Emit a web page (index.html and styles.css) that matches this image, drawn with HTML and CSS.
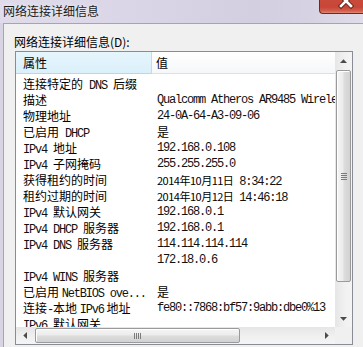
FILE: index.html
```html
<!DOCTYPE html>
<html lang="zh-CN">
<head>
<meta charset="utf-8">
<title>网络连接详细信息</title>
<link rel="stylesheet" href="styles.css">
</head>
<body>
<div class="win">
  <div class="titlebar">
    <span class="title">网络连接详细信息</span>
    <div class="close">
      <svg width="43" height="13" viewBox="0 0 43 13">
        <path d="M21 -4 L31 6 M31 -4 L21 6" stroke="#6b2218" stroke-width="4.5" stroke-linecap="square"/>
        <path d="M21 -4 L31 6 M31 -4 L21 6" stroke="#ffffff" stroke-width="2.6" stroke-linecap="square"/>
      </svg>
    </div>
  </div>
  <div class="client">
    <div class="label">网络连接详细信息(D):</div>
    <div class="listbox">
      <div class="view">
        <div class="header">
          <div class="hcell h1">属性</div>
          <div class="hcell h2">值</div>
        </div>
        <div class="rows">
          <div class="row"><div class="c1">连接特定的<span class="m"> DNS </span>后缀</div><div class="c2"></div></div>
          <div class="row"><div class="c1">描述</div><div class="c2 m">Qualcomm Atheros AR9485 Wireless Network Adapter</div></div>
          <div class="row"><div class="c1">物理地址</div><div class="c2 m">24-0A-64-A3-09-06</div></div>
          <div class="row"><div class="c1">已启用<span class="m"> DHCP</span></div><div class="c2">是</div></div>
          <div class="row"><div class="c1"><span class="m">IPv4 </span>地址</div><div class="c2 m">192.168.0.108</div></div>
          <div class="row"><div class="c1"><span class="m">IPv4 </span>子网掩码</div><div class="c2 m">255.255.255.0</div></div>
          <div class="row"><div class="c1">获得租约的时间</div><div class="c2"><span class="d">2014年10月11日</span><span class="m"> 8:34:22</span></div></div>
          <div class="row"><div class="c1">租约过期的时间</div><div class="c2"><span class="d">2014年10月12日</span><span class="m"> 14:46:18</span></div></div>
          <div class="row"><div class="c1"><span class="m">IPv4 </span>默认网关</div><div class="c2 m">192.168.0.1</div></div>
          <div class="row"><div class="c1"><span class="m">IPv4 DHCP </span>服务器</div><div class="c2 m">192.168.0.1</div></div>
          <div class="row"><div class="c1"><span class="m">IPv4 DNS </span>服务器</div><div class="c2 m">114.114.114.114</div></div>
          <div class="row"><div class="c1"></div><div class="c2 m">172.18.0.6</div></div>
          <div class="row"><div class="c1"><span class="m">IPv4 WINS </span>服务器</div><div class="c2"></div></div>
          <div class="row"><div class="c1">已启用 <span class="m">NetBIOS ove...</span></div><div class="c2">是</div></div>
          <div class="row"><div class="c1">连接<span class="m">-</span>本地 <span class="m">IPv6</span> 地址</div><div class="c2 m">fe80::7868:bf57:9abb:dbe0%13</div></div>
          <div class="row"><div class="c1"><span class="m">IPv6 </span>默认网关</div><div class="c2"></div></div>
        </div>
      </div>
      <div class="vscroll">
        <div class="sbtn">
          <svg width="7" height="4" viewBox="0 0 7 4"><path d="M0 4 L3.5 0.3 L7 4 Z" fill="#4a4a4a"/></svg>
        </div>
        <div class="vtrack">
          <div class="vthumb">
            <svg width="6" height="7" viewBox="0 0 6 7"><path d="M0 0.5 H6 M0 2.5 H6 M0 4.5 H6 M0 6.5 H6" stroke="#7a7a7a" stroke-width="1"/></svg>
          </div>
        </div>
        <div class="sbtn">
          <svg width="7" height="4" viewBox="0 0 7 4"><path d="M0 0 L3.5 3.7 L7 0 Z" fill="#4a4a4a"/></svg>
        </div>
      </div>
      <div class="hscroll">
        <div class="sbtn">
          <svg width="4" height="7" viewBox="0 0 4 7"><path d="M4 0 L0.3 3.5 L4 7 Z" fill="#4a4a4a"/></svg>
        </div>
        <div class="htrack">
          <div class="hthumb">
            <svg width="7" height="6" viewBox="0 0 7 6"><path d="M0.5 0 V6 M2.5 0 V6 M4.5 0 V6 M6.5 0 V6" stroke="#7a7a7a" stroke-width="1"/></svg>
          </div>
        </div>
        <div class="sbtn">
          <svg width="4" height="7" viewBox="0 0 4 7"><path d="M0 0 L3.7 3.5 L0 7 Z" fill="#4a4a4a"/></svg>
        </div>
      </div>
      <div class="corner"></div>
    </div>
  </div>
</div>
</body>
</html>
```

FILE: styles.css
```css
html, body {
  margin: 0;
  padding: 0;
}

body {
  width: 363px;
  height: 347px;
  overflow: hidden;
  background: #d8d4e4;
  font-family: "Noto Sans CJK SC", "Noto Sans", sans-serif;
  font-size: 12px;
  color: #000;
}

.win {
  display: flex;
  flex-direction: column;
  height: 347px;
}

.titlebar {
  height: 23px;
  flex: none;
  display: flex;
  align-items: flex-start;
  background: linear-gradient(90deg, #dfdbeb 0%, #dad6e7 35%, #d3cee0 70%, #d6d2e3 85%, #e0dcea 100%);
}

.title {
  padding-left: 3px;
  line-height: 21px;
  color: #1a1a1a;
  text-shadow: 0 0 4px rgba(255, 255, 255, 0.8);
}

.close {
  margin-left: auto;
  width: 43px;
  height: 13px;
  border: 1px solid #6e2a22;
  border-top: none;
  border-right: none;
  border-radius: 0 0 0 4px;
  background: linear-gradient(#c9493a 0%, #c84637 55%, #d3604f 85%, #e08a78 100%);
  overflow: hidden;
}

.close svg {
  display: block;
}

.client {
  flex: 1;
  margin-left: 3px;
  border-top: 1px solid #a7a3b3;
  border-left: 1px solid #a7a3b3;
  background: #f0f0f0;
  padding: 10px 0 0 10px;
}

.label {
  height: 16px;
  line-height: 16px;
  margin-bottom: 1px;
}

.listbox {
  margin-left: 1px;
  width: 338px;
  height: 294px;
  box-sizing: border-box;
  border: 1px solid #898c95;
  background: #fff;
  display: grid;
  grid-template-columns: 319px 17px;
  grid-template-rows: 275px 17px;
}

.view {
  overflow: hidden;
}

.header {
  display: flex;
  height: 22px;
}

.hcell {
  box-sizing: border-box;
  height: 22px;
  line-height: 21px;
  white-space: nowrap;
}

.h1 {
  width: 136px;
  padding-left: 7px;
  background: linear-gradient(#e6f5fc, #dbf0fa);
  border-right: 1px solid #c5dbe7;
  border-bottom: 1px solid #b9d7e8;
}

.h2 {
  flex: 1;
  padding-left: 4px;
  background: linear-gradient(#ffffff, #f6f7f9);
  border-bottom: 1px solid #dde1e6;
}

.rows {
  padding-top: 2px;
}

.row {
  display: grid;
  grid-template-columns: 136px 183px;
  height: 16px;
  line-height: 16px;
  white-space: nowrap;
}

.c1 {
  padding-left: 7px;
  overflow: hidden;
}

.c2 {
  padding-left: 5px;
  overflow: hidden;
}

.m {
  font-family: "Liberation Mono", "DejaVu Sans Mono", monospace;
  font-size: 12px;
  letter-spacing: -1.2px;
  color: #111;
}

.d {
  font-size: 11px;
  letter-spacing: -0.5px;
}

.vscroll {
  display: flex;
  flex-direction: column;
  background: linear-gradient(90deg, #e6e6e6, #f1f1f1 60%, #f4f4f4);
}

.hscroll {
  display: flex;
  background: linear-gradient(#e6e6e6, #f1f1f1 60%, #f4f4f4);
}

.sbtn {
  flex: none;
  width: 17px;
  height: 17px;
  display: flex;
  align-items: center;
  justify-content: center;
}

.vtrack {
  flex: 1;
  padding-top: 1px;
}

.vthumb {
  margin-left: 1px;
  width: 15px;
  height: 212px;
  box-sizing: border-box;
  border: 1px solid #9a9a9a;
  border-radius: 2px;
  background: linear-gradient(90deg, #f5f5f5 0%, #ececec 45%, #dcdcdc 55%, #d2d2d2 100%);
  box-shadow: inset 1px 1px 0 #ffffff;
  display: flex;
  align-items: center;
  justify-content: center;
}

.htrack {
  flex: 1;
  padding-left: 2px;
}

.hthumb {
  margin-top: 1px;
  width: 205px;
  height: 15px;
  box-sizing: border-box;
  border: 1px solid #9a9a9a;
  border-radius: 2px;
  background: linear-gradient(#f5f5f5 0%, #ececec 45%, #dcdcdc 55%, #d2d2d2 100%);
  box-shadow: inset 1px 1px 0 #ffffff;
  display: flex;
  align-items: center;
  justify-content: center;
}

.vthumb svg,
.hthumb svg,
.sbtn svg {
  display: block;
}

.corner {
  background: #f0f0f0;
}
```
